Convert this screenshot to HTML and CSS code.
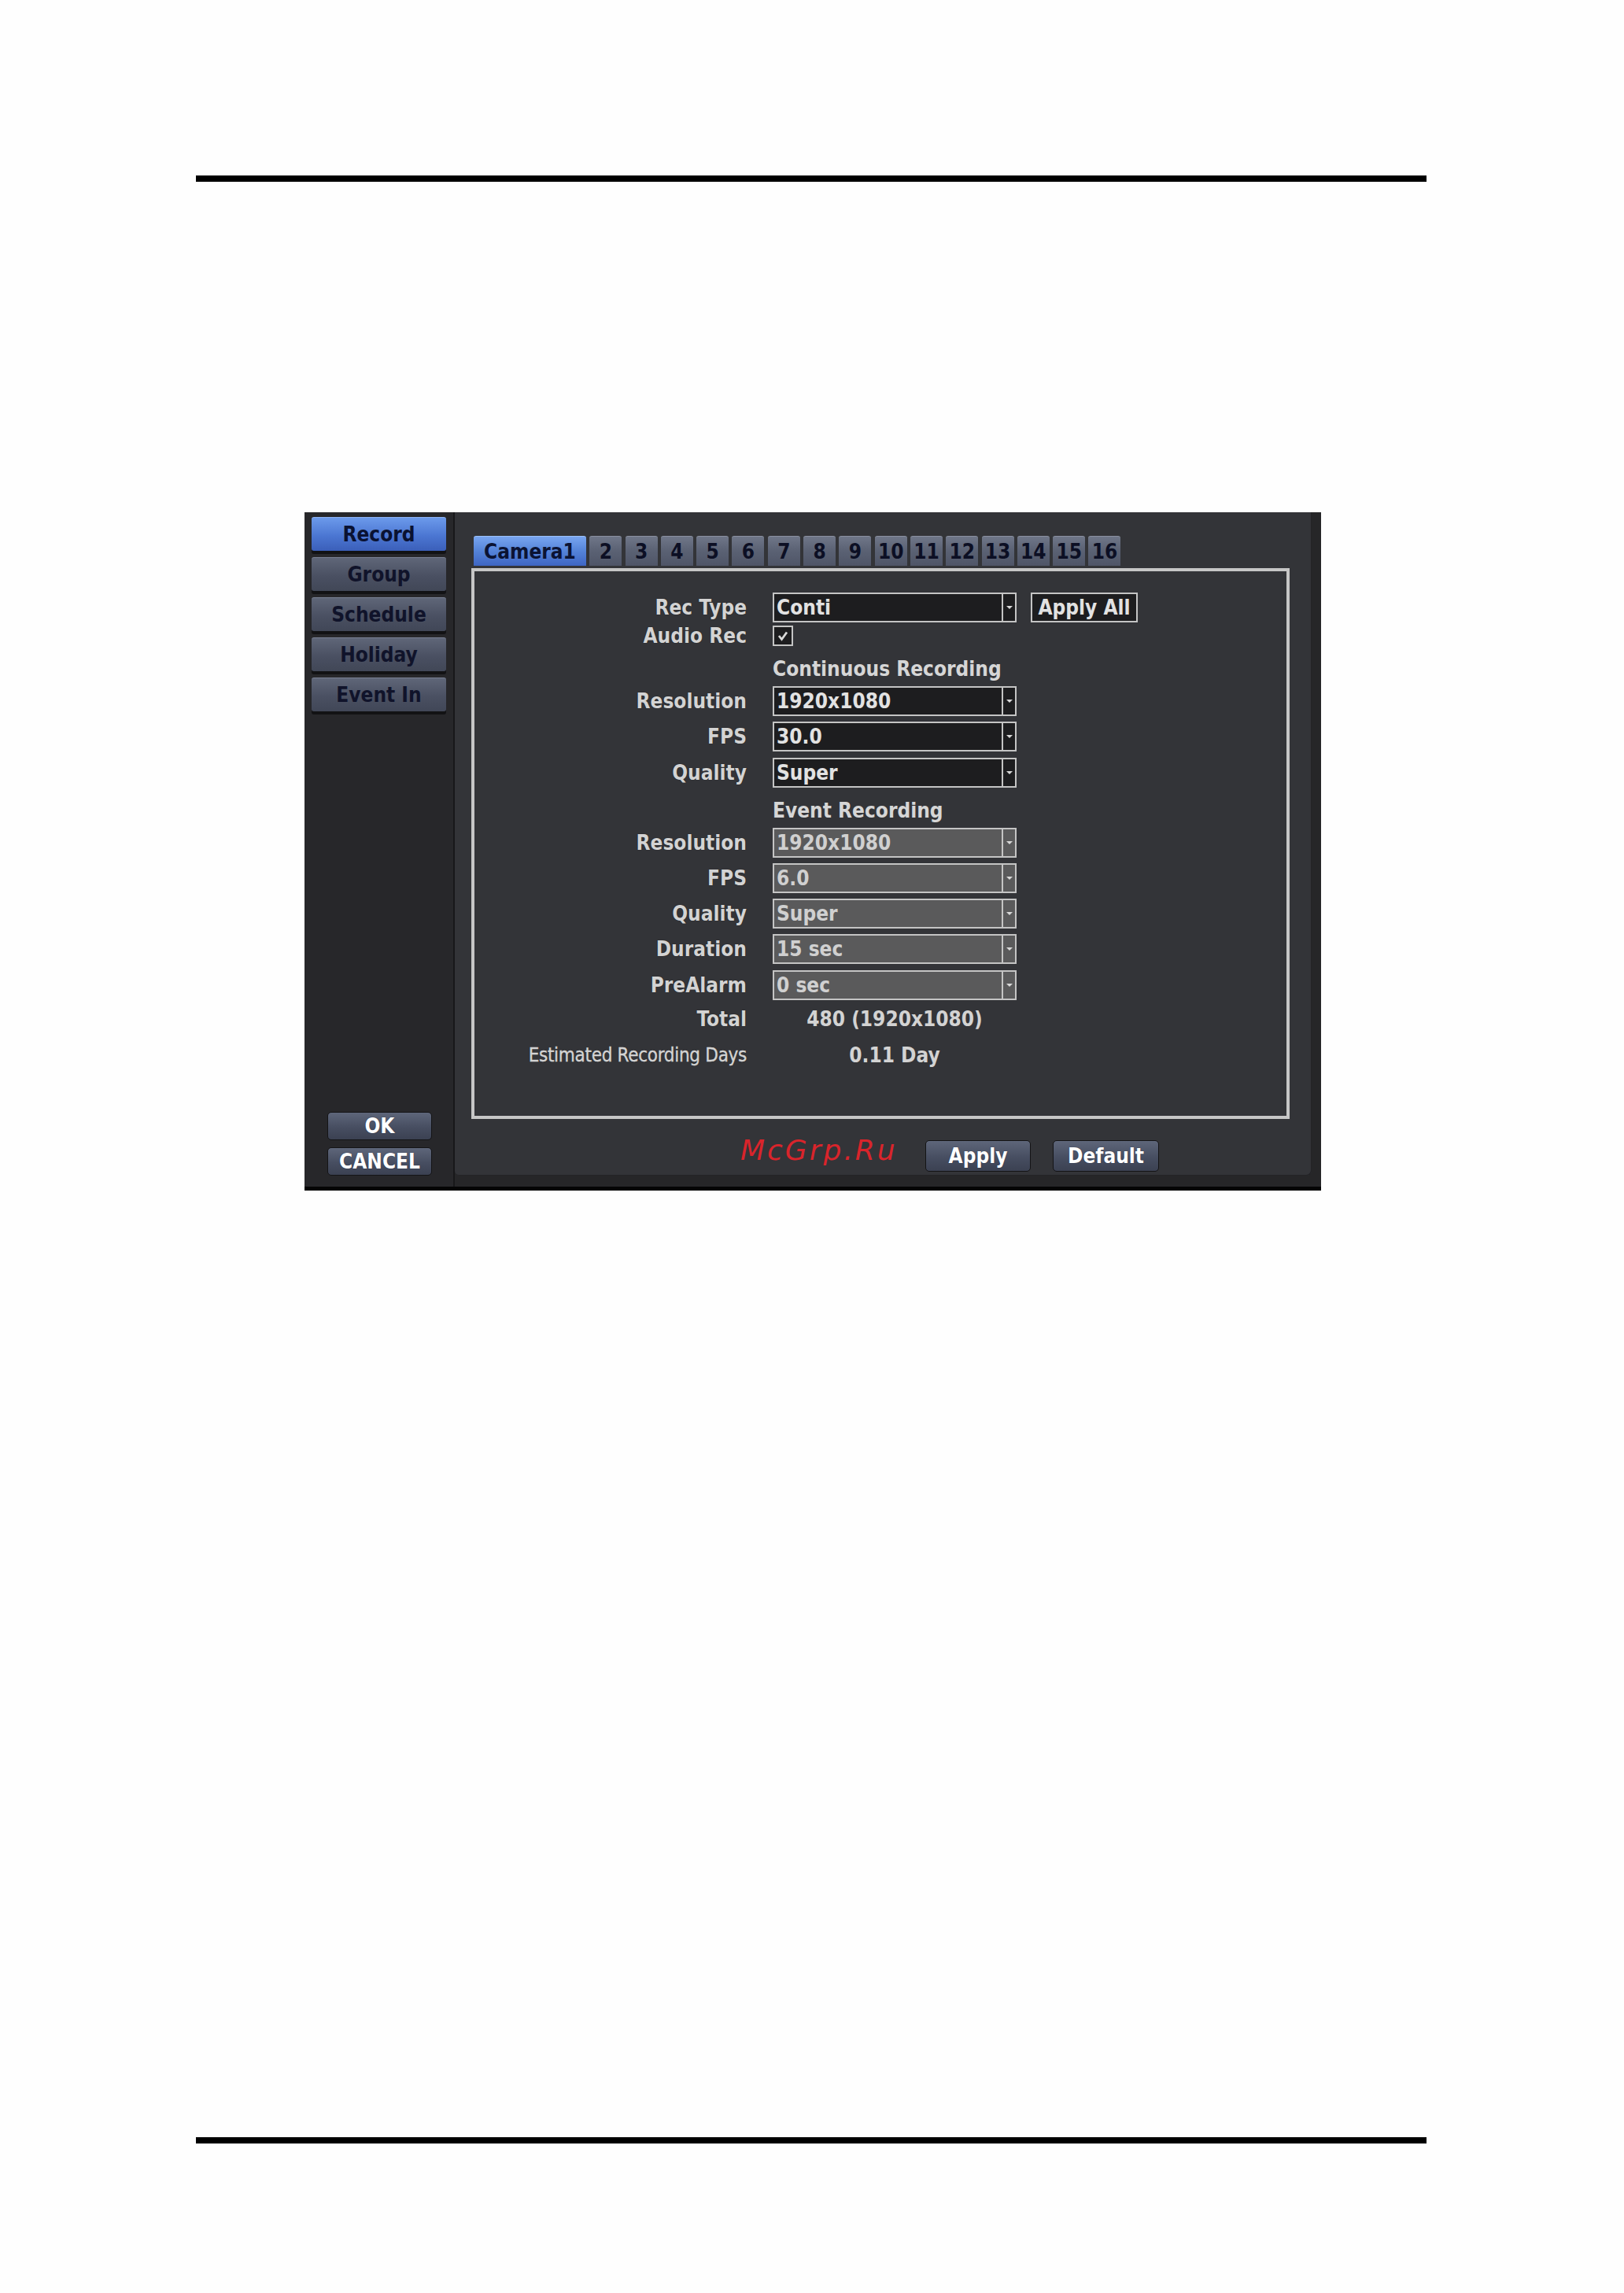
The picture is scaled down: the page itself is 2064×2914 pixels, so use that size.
FILE: index.html
```html
<!DOCTYPE html>
<html>
<head>
<meta charset="utf-8">
<title>Record Setup</title>
<link rel="stylesheet" href="styles.css">
</head>
<body>
<div class="page">
  <div class="rule"></div>

  <div class="dialog">
    <div class="sidebar">
      <div class="menu">
        <div class="menu-btn active">Record</div>
        <div class="menu-btn">Group</div>
        <div class="menu-btn">Schedule</div>
        <div class="menu-btn">Holiday</div>
        <div class="menu-btn">Event In</div>
      </div>
      <div class="actions">
        <div class="btn act-btn">OK</div>
        <div class="btn act-btn">CANCEL</div>
      </div>
    </div>

    <div class="panel">
      <div class="tabs">
        <div class="tab active">Camera1</div>
        <div class="tab">2</div>
        <div class="tab">3</div>
        <div class="tab">4</div>
        <div class="tab">5</div>
        <div class="tab">6</div>
        <div class="tab">7</div>
        <div class="tab">8</div>
        <div class="tab">9</div>
        <div class="tab">10</div>
        <div class="tab">11</div>
        <div class="tab">12</div>
        <div class="tab">13</div>
        <div class="tab">14</div>
        <div class="tab">15</div>
        <div class="tab">16</div>
      </div>

      <div class="box">
        <div class="form">
          <div class="row r-first">
            <div class="lbl">Rec Type</div>
            <div class="sel"><div class="val">Conti</div><div class="arr"><span class="tri"></span></div></div>
            <div class="apply-all">Apply All</div>
          </div>
          <div class="row r-check">
            <div class="lbl">Audio Rec</div>
            <div class="check">
              <svg viewBox="0 0 22 22" width="22" height="22"><polyline points="6,11 9.5,15.5 16,6.5" fill="none" stroke="#d8d8d8" stroke-width="2.8"/></svg>
            </div>
          </div>
          <div class="row r-head">
            <div class="lbl"></div>
            <div class="head">Continuous Recording</div>
          </div>
          <div class="row r-after-head">
            <div class="lbl">Resolution</div>
            <div class="sel"><div class="val">1920x1080</div><div class="arr"><span class="tri"></span></div></div>
          </div>
          <div class="row">
            <div class="lbl">FPS</div>
            <div class="sel"><div class="val">30.0</div><div class="arr"><span class="tri"></span></div></div>
          </div>
          <div class="row">
            <div class="lbl">Quality</div>
            <div class="sel"><div class="val">Super</div><div class="arr"><span class="tri"></span></div></div>
          </div>
          <div class="row r-head">
            <div class="lbl"></div>
            <div class="head">Event Recording</div>
          </div>
          <div class="row r-after-head">
            <div class="lbl">Resolution</div>
            <div class="sel disabled"><div class="val">1920x1080</div><div class="arr"><span class="tri"></span></div></div>
          </div>
          <div class="row">
            <div class="lbl">FPS</div>
            <div class="sel disabled"><div class="val">6.0</div><div class="arr"><span class="tri"></span></div></div>
          </div>
          <div class="row">
            <div class="lbl">Quality</div>
            <div class="sel disabled"><div class="val">Super</div><div class="arr"><span class="tri"></span></div></div>
          </div>
          <div class="row">
            <div class="lbl">Duration</div>
            <div class="sel disabled"><div class="val">15 sec</div><div class="arr"><span class="tri"></span></div></div>
          </div>
          <div class="row">
            <div class="lbl">PreAlarm</div>
            <div class="sel disabled"><div class="val">0 sec</div><div class="arr"><span class="tri"></span></div></div>
          </div>
          <div class="row r-total">
            <div class="lbl">Total</div>
            <div class="info">480 (1920x1080)</div>
          </div>
          <div class="row r-est">
            <div class="lbl small">Estimated Recording Days</div>
            <div class="info">0.11 Day</div>
          </div>
        </div>
      </div>

      <div class="footer">
        <span class="watermark">McGrp.Ru</span>
        <div class="btn foot-btn apply">Apply</div>
        <div class="btn foot-btn default">Default</div>
      </div>
    </div>
  </div>

  <div class="rule rule-bottom"></div>
</div>
</body>
</html>
```

FILE: styles.css
```css
html, body {
  margin: 0;
  padding: 0;
  background: #fefefe;
}

.page {
  width: 2064px;
  height: 2914px;
  box-sizing: border-box;
  padding-top: 223px;
  font-family: "DejaVu Sans Condensed", "DejaVu Sans", sans-serif;
  font-stretch: condensed;
  font-weight: bold;
  font-size: 26px;
}

.rule {
  width: 1564px;
  height: 8px;
  margin-left: 249px;
  background: #000;
}

.rule-bottom {
  margin-top: 1203px;
}

/* ---------- dialog ---------- */
.dialog {
  margin-top: 420px;
  margin-left: 387px;
  width: 1292px;
  height: 862px;
  box-sizing: border-box;
  border-bottom: 5px solid #050505;
  background: #262628;
  display: flex;
  align-items: flex-start;
}

.sidebar {
  width: 191px;
  height: 857px;
  box-sizing: border-box;
  border-right: 2px solid #18181a;
  background: #27272a;
  display: flex;
  flex-direction: column;
  justify-content: space-between;
}

.menu {
  display: flex;
  flex-direction: column;
  gap: 8px;
  padding: 6px 0 0 9px;
}

.menu-btn {
  width: 171px;
  height: 43px;
  box-sizing: border-box;
  line-height: 42px;
  text-align: center;
  color: #10132a;
  border-radius: 3px;
  border-top: 1px solid #7a8194;
  background: linear-gradient(#5f6678, #4a5062 55%, #414757);
  box-shadow: 0 4px 0 #121214;
}

.menu-btn.active {
  border-top: 1px solid #8fb4f5;
  background: linear-gradient(#6c9aeb, #4b76d2 55%, #3b5fb9);
  color: #0a1232;
}

.actions {
  display: flex;
  flex-direction: column;
  gap: 9px;
  padding: 0 0 14px 29px;
}

.btn {
  box-sizing: border-box;
  text-align: center;
  color: #ffffff;
  border: 1px solid #141416;
  border-radius: 5px;
  background: linear-gradient(#5e667a, #474e61 55%, #3b4152);
  text-shadow: 0 0 1px #1c2440;
}

.act-btn {
  width: 133px;
  height: 36px;
  line-height: 34px;
}

/* ---------- right panel ---------- */
.panel {
  width: 1089px;
  height: 843px;
  box-sizing: border-box;
  background: #333438;
  border-radius: 0 0 6px 6px;
  box-shadow: inset -1px -1px 0 #232326;
  padding: 30px 28px 0 21px;
}

.tabs {
  display: flex;
  gap: 4.3px;
  padding-left: 3px;
  height: 38px;
  margin-bottom: 3px;
}

.tab {
  width: 41px;
  height: 38px;
  box-sizing: border-box;
  line-height: 38px;
  text-align: center;
  color: #0c0f24;
  border-radius: 3px 3px 0 0;
  border-top: 1px solid #8a90a0;
  background: linear-gradient(#6f7688, #5a6173 50%, #4f5567);
}

.tab.active {
  width: 143px;
  color: #0b1333;
  border-top: 1px solid #9cc0f7;
  background: linear-gradient(#78a5f0, #5483d8 50%, #3e65c3);
}

.box {
  width: 1040px;
  height: 700px;
  box-sizing: border-box;
  border: 4px solid #c6c6c6;
  padding: 27px 0 0 37px;
}

.form {
  display: flex;
  flex-direction: column;
  color: #d3d3d3;
}

.row {
  display: flex;
  align-items: center;
  height: 38px;
  margin-top: 7.3px;
}

.row.r-first {
  margin-top: 0;
}

.row.r-check {
  height: 26px;
  margin-top: 4px;
}

.row.r-head {
  margin-top: 10px;
}

.row.r-after-head {
  margin-top: 3px;
}

.row.r-total {
  margin-top: 5px;
}

.row.r-est {
  margin-top: 8px;
}

.lbl {
  width: 309px;
  flex: none;
  margin-right: 33px;
  text-align: right;
  white-space: nowrap;
  text-shadow: 0 0 1px #111;
}

.lbl.small {
  font-weight: normal;
  font-size: 24px;
  letter-spacing: -0.3px;
  -webkit-text-stroke: 0.4px #d3d3d3;
}

.head {
  color: #d6d6d6;
  white-space: nowrap;
}

.sel {
  width: 310px;
  height: 38px;
  box-sizing: border-box;
  border: 2px solid #c4c4c4;
  background: #1d1d1f;
  color: #e2e2e2;
  display: flex;
}

.sel .val {
  flex: 1;
  padding-left: 3px;
  line-height: 34px;
  white-space: nowrap;
}

.sel .arr {
  width: 17px;
  box-sizing: border-box;
  border-left: 2px solid #c4c4c4;
  display: flex;
  align-items: center;
  justify-content: center;
}

.tri {
  width: 0;
  height: 0;
  border-left: 4px solid transparent;
  border-right: 4px solid transparent;
  border-top: 4px solid #d8d8d8;
}

.sel.disabled {
  background: #5a5a5b;
  color: #d0d0d0;
}

.apply-all {
  width: 136px;
  height: 38px;
  box-sizing: border-box;
  margin-left: 18px;
  border: 2px solid #c4c4c4;
  background: #1d1d1f;
  color: #e2e2e2;
  line-height: 34px;
  text-align: center;
}

.check {
  width: 26px;
  height: 26px;
  box-sizing: border-box;
  border: 2px solid #c4c4c4;
  background: #1d1d1f;
  display: flex;
  align-items: center;
  justify-content: center;
}

.check svg {
  display: block;
}

.info {
  width: 310px;
  text-align: center;
  color: #d3d3d3;
  white-space: nowrap;
}

/* ---------- footer ---------- */
.footer {
  display: flex;
  align-items: flex-start;
  margin-top: 27px;
  padding-left: 342px;
}

.watermark {
  font-family: "DejaVu Sans", sans-serif;
  font-stretch: normal;
  font-weight: normal;
  font-style: italic;
  font-size: 36px;
  line-height: 40px;
  letter-spacing: 3px;
  color: #d9242b;
  margin-top: -7px;
  width: 195px;
  white-space: nowrap;
}

.foot-btn {
  height: 40px;
  line-height: 38px;
}

.foot-btn.apply {
  width: 134px;
  margin-left: 40px;
}

.foot-btn.default {
  width: 135px;
  margin-left: 28px;
}
```
